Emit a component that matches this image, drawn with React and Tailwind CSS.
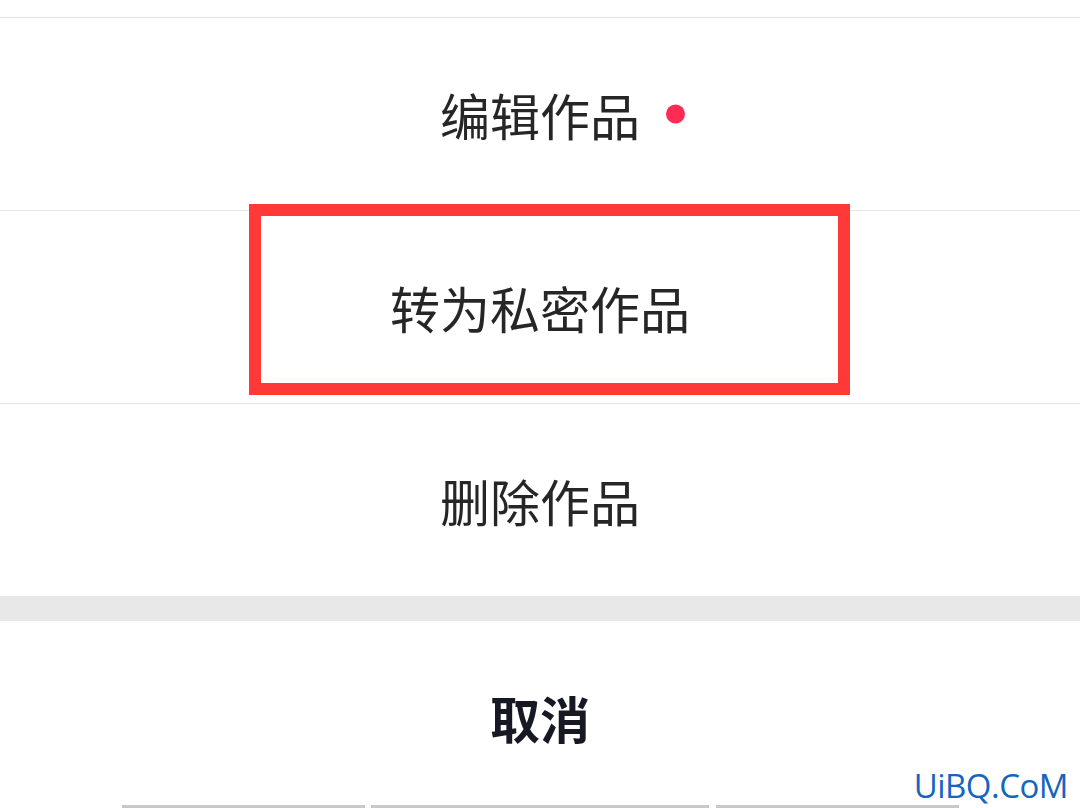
import React from "react";

const cjk = { fontFamily: '"Noto Sans CJK SC", "Noto Sans", sans-serif' };

function Row({ label, dot, last }) {
  return (
    <div
      className={
        "flex h-[193px] items-center justify-center " +
        (last ? "" : "border-b border-[#e6e6e6]")
      }
    >
      <span className="relative text-[50px] leading-none text-[#262626]">
        {label}
        {dot && (
          <span className="absolute left-[226px] top-1/2 h-[19px] w-[19px] -translate-y-1/2 rounded-full bg-[#fe2c55]" />
        )}
      </span>
    </div>
  );
}

export default function App() {
  return (
    <div className="relative h-[808px] w-[1080px] overflow-hidden bg-white" style={cjk}>
      <div className="h-[18px] border-b border-[#e2e2e2]" />
      <Row label="编辑作品" dot />
      <Row label="转为私密作品" />
      <div className="flex h-[192px] items-center justify-center">
        <span className="text-[50px] leading-none text-[#262626]">删除作品</span>
      </div>
      <div className="h-[25px] bg-[#e8e8e8]" />
      <div className="relative flex h-[184px] items-center justify-center">
        <span className="pt-2 text-[50px] font-bold leading-none text-[#161823]">取消</span>
        <span
          className="absolute bottom-[3px] right-[12px] text-[33px] leading-none tracking-[-0.5px] text-[#1565c0]"
          style={{ fontFamily: '"Open Sans", sans-serif' }}
        >
          UiBQ.CoM
        </span>
      </div>
      <div className="flex h-[4px] pl-[122px]">
        <div className="w-[243px] bg-[#c8c8c8]" />
        <div className="ml-[6px] w-[338px] bg-[#c8c8c8]" />
        <div className="ml-[7px] w-[243px] bg-[#c8c8c8]" />
      </div>
      <div className="absolute left-[249px] top-[204px] h-[191px] w-[601px] border-[12px] border-[#ff3838]" />
    </div>
  );
}
